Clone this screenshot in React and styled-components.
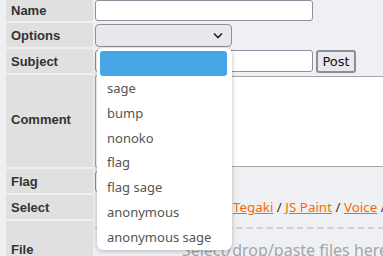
import React from 'react'
import styled, { createGlobalStyle } from 'styled-components'

const GlobalStyle = createGlobalStyle`
  body {
    margin:0;
    background:#eff0f4;
    overflow:hidden;
    font-family:"Noto Sans", "Open Sans", sans-serif;
  }
`

const Page = styled.div`
  position:relative;
  width:383px;
  height:256px;
  overflow:hidden;
  padding-left:6px;
  box-sizing:border-box;
`

const Form = styled.div`
  display:grid;
  grid-template-columns:87px 400px;
  grid-template-rows:21px 24px 24px 92px 24px 24px 40px;
  gap:2px;
`

const Label = styled.div`
  background:#e0e0e0;
  color:#333;
  font-family:"Liberation Sans", Arial, sans-serif;
  font-weight:bold;
  font-size:13px;
  padding-left:5px;
  display:flex;
  align-items:${p => p.$align || 'center'};
  padding-bottom:${p => p.$pb || 0}px;
`

const Field = styled.div`
  display:flex;
  align-items:${p => p.$align || 'center'};
  gap:3px;
`

const TextInput = styled.div`
  width:218px;
  height:${p => p.$h || 22}px;
  box-sizing:border-box;
  background:#fff;
  border:1px solid #8f8f9d;
  border-radius:3px;
`

const Select = styled.div`
  width:137px;
  height:23px;
  box-sizing:border-box;
  background:${p => p.$light ? '#fff' : '#e9e9ed'};
  border:1px solid #8f8f9d;
  border-radius:4px;
  display:flex;
  align-items:center;
  justify-content:flex-end;
  padding-right:8px;
`

const PostButton = styled.div`
  width:40px;
  height:23px;
  box-sizing:border-box;
  background:#e9e9ed;
  border:2px solid #8d8d97;
  border-radius:3px;
  font-family:"DejaVu Sans", sans-serif;
  font-size:13px;
  color:#111;
  display:flex;
  align-items:center;
  justify-content:center;
`

const TextArea = styled.div`
  width:400px;
  height:91px;
  background:#fff;
  border:1px solid #a6a6a6;
  box-sizing:border-box;
  margin-top:1px;
`

const Links = styled.div`
  font-size:13.4px;
  color:#333;
  white-space:nowrap;
  padding-left:2px;
`

const Link = styled.a`
  color:#ff6600;
  text-decoration:underline;
`

const DropZone = styled.div`
  margin-top:6px;
  width:380px;
  border-top:2px dashed #cfcfd4;
  color:#a5a5a8;
  font-size:16px;
  text-align:center;
  padding-top:10px;
  white-space:nowrap;
`

const Popup = styled.div`
  position:absolute;
  left:97px;
  top:48px;
  width:135px;
  height:202px;
  box-sizing:border-box;
  padding:3px 5px 0 3px;
  background:#fff;
  border-radius:6px;
  box-shadow:0 1px 5px rgba(0,0,0,0.25);
`

const Item = styled.div`
  height:24.75px;
  display:flex;
  align-items:center;
  padding-left:7px;
  font-size:13px;
  color:#555;
  border-radius:3px;
  background:${p => p.$active ? '#47a6e6' : 'transparent'};
  white-space:nowrap;
`

const Chevron = () => (
  <svg width="10" height="7" viewBox="0 0 10 7">
    <path d="M1 1.5 L5 5.5 L9 1.5" fill="none" stroke="#222" strokeWidth="1.6" />
  </svg>
)

const options = ['', 'sage', 'bump', 'nonoko', 'flag', 'flag sage', 'anonymous', 'anonymous sage']

const App = () => (
  <Page>
    <GlobalStyle />
    <Form>
      <Label>Name</Label>
      <Field $align="flex-start"><TextInput $h={21} /></Field>

      <Label>Options</Label>
      <Field><Select><Chevron /></Select></Field>

      <Label>Subject</Label>
      <Field><TextInput /><PostButton>Post</PostButton></Field>

      <Label $pb={4}>Comment</Label>
      <Field $align="flex-start"><TextArea /></Field>

      <Label>Flag</Label>
      <Field><Select $light><Chevron /></Select></Field>

      <Label>Select</Label>
      <Field>
        <Links>
          Draw <Link>Oekaki</Link> / <Link>Paint</Link> / <Link>Tegaki</Link> / <Link>JS Paint</Link> / <Link>Voice</Link> / <Link>Audio</Link>
        </Links>
      </Field>

      <Label $align="flex-end" $pb={4}>File</Label>
      <Field $align="flex-start"><DropZone>Select/drop/paste files here</DropZone></Field>
    </Form>

    <Popup>
      {options.map((o, i) => (
        <Item key={i} $active={i === 0}>{o}</Item>
      ))}
    </Popup>
  </Page>
)

export default App
